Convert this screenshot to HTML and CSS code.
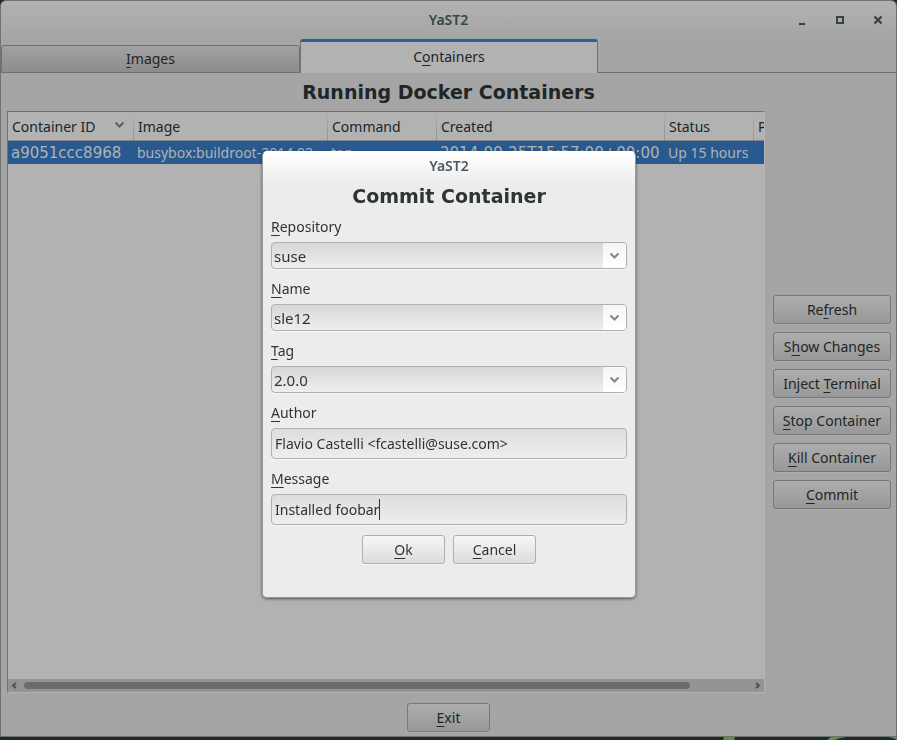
FILE: index.html
```html
<!DOCTYPE html>
<html lang="en">
<head>
<meta charset="utf-8">
<title>YaST2</title>
<link rel="stylesheet" href="styles.css">
</head>
<body>
<main class="window">
  <header class="titlebar">
    <span class="title">YaST2</span>
    <div class="window-controls">
      <button type="button" aria-label="Minimize"><svg width="10" height="10" viewBox="0 0 10 10"><path d="M2 8h6v2H2z" fill="#384347"/></svg></button>
      <button type="button" aria-label="Maximize"><svg width="10" height="10" viewBox="0 0 10 10"><path d="M2 2h6v6H2z" fill="none" stroke="#384347" stroke-width="2"/></svg></button>
      <button type="button" aria-label="Close"><svg width="10" height="10" viewBox="0 0 10 10"><path d="M1.500 1.500l7 7M8.500 1.500l-7 7" stroke="#384347" stroke-width="2.400"/></svg></button>
    </div>
  </header>
  <nav class="tabs">
    <button type="button" class="tab"><span><u>I</u>mages</span></button>
    <button type="button" class="tab active"><span>C<u>o</u>ntainers</span></button>
  </nav>
  <h1>Running Docker Containers</h1>
  <section class="content">
    <div class="panel">
      <table>
        <colgroup><col class="c-id"><col class="c-image"><col class="c-command"><col class="c-created"><col class="c-status"><col class="c-ports"></colgroup>
        <thead>
          <tr>
            <th>Container ID <svg class="sort" width="11" height="8" viewBox="0 0 11 8"><path d="M1.500 1.500l4 4 4-4" fill="none" stroke="#5f6162" stroke-width="2"/></svg></th>
            <th>Image</th><th>Command</th><th>Created</th><th>Status</th><th>Ports</th>
          </tr>
        </thead>
        <tbody>
          <tr><td class="numeric">a9051ccc8968</td><td>busybox:buildroot-2014.02</td><td>top</td><td class="numeric">2014-09-25T15:57:00+00:00</td><td>Up 15 hours</td><td></td></tr>
        </tbody>
      </table>
      <div class="scrollbar">
        <svg width="7" height="7" viewBox="0 0 7 7"><path d="M5 1L2 3.500 5 6" fill="none" stroke="#4f5152" stroke-width="2"/></svg>
        <div class="track"><div class="thumb"></div></div>
        <svg width="7" height="7" viewBox="0 0 7 7"><path d="M2 1l3 2.500L2 6" fill="none" stroke="#4f5152" stroke-width="2"/></svg>
      </div>
    </div>
    <aside class="actions">
      <button type="button" class="btn dim">Re<u>f</u>resh</button>
      <button type="button" class="btn dim">S<u>h</u>ow Changes</button>
      <button type="button" class="btn dim">Inject <u>T</u>erminal</button>
      <button type="button" class="btn dim"><u>S</u>top Container</button>
      <button type="button" class="btn dim"><u>K</u>ill Container</button>
      <button type="button" class="btn dim"><u>C</u>ommit</button>
    </aside>
  </section>
  <footer><button type="button" class="btn dim small"><u>E</u>xit</button></footer>
</main>
<div class="desktop"><svg width="897" height="3" viewBox="0 0 897 3"><path d="M724 0h11l-1 3h-11zM831 0h16q-8 1-12 3h-8zM888 0h9v3q-3-2-9-3z" fill="#5c9439"/></svg></div>

<div class="overlay">
  <form class="dialog" role="dialog" aria-labelledby="dialog-heading">
    <div class="dialog-title">YaST2</div>
    <h2 id="dialog-heading">Commit Container</h2>
    <div class="field">
      <label for="repository"><u>R</u>epository</label>
      <div class="combo">
        <select id="repository"><option>suse</option></select>
        <span class="arrow"><svg width="11" height="8" viewBox="0 0 11 8"><path d="M1.500 1.500l4 4 4-4" fill="none" stroke="#868686" stroke-width="2"/></svg></span>
      </div>
    </div>
    <div class="field">
      <label for="name"><u>N</u>ame</label>
      <div class="combo">
        <select id="name"><option>sle12</option></select>
        <span class="arrow"><svg width="11" height="8" viewBox="0 0 11 8"><path d="M1.500 1.500l4 4 4-4" fill="none" stroke="#868686" stroke-width="2"/></svg></span>
      </div>
    </div>
    <div class="field">
      <label for="tag"><u>T</u>ag</label>
      <div class="combo">
        <select id="tag"><option>2.0.0</option></select>
        <span class="arrow"><svg width="11" height="8" viewBox="0 0 11 8"><path d="M1.500 1.500l4 4 4-4" fill="none" stroke="#868686" stroke-width="2"/></svg></span>
      </div>
    </div>
    <div class="field">
      <label for="author"><u>A</u>uthor</label>
      <input id="author" type="text" value="Flavio Castelli &lt;fcastelli@suse.com&gt;">
    </div>
    <div class="field">
      <label for="message"><u>M</u>essage</label>
      <div class="caret-box">
        <input id="message" type="text" value="Installed foobar">
        <span class="caret"></span>
      </div>
    </div>
    <div class="dialog-buttons">
      <button type="button" class="btn small"><u>O</u>k</button>
      <button type="button" class="btn small"><u>C</u>ancel</button>
    </div>
  </form>
</div>
</body>
</html>
```

FILE: styles.css
```css
* { box-sizing: border-box; }

body {
  margin: 0;
  min-height: 100vh;
  display: flex;
  flex-direction: column;
  background: #1b2c22;
  color: #202627;
  font: 14px/20px "Noto Sans", sans-serif;
}

button, input, select { font: inherit; color: inherit; }
button { padding: 0; border: 0; background: none; }
u { text-underline-offset: 3px; text-decoration-thickness: 1px; text-decoration-skip-ink: none; }
svg { display: block; }

.window {
  flex: 1;
  display: flex;
  flex-direction: column;
  min-height: 0;
  border: 1px solid #717171;
  border-radius: 6px 6px 0 0;
  background: linear-gradient(#b2b2b2, #a5a5a5 38px);
}

.titlebar {
  display: grid;
  grid-template-columns: 1fr auto 1fr;
  align-items: center;
  height: 38px;
}
.title { grid-column: 2; }
.title, .dialog-title { font-size: 14px; font-weight: 600; color: #394649; }
.window-controls { display: flex; justify-content: flex-end; gap: 28px; padding-right: 13px; }

.tabs { display: flex; align-items: flex-end; height: 34px; background: linear-gradient(#717171, #717171) bottom / 100% 1px no-repeat; }
.tab {
  width: 299px;
  height: 28px;
  padding-bottom: 1px;
  border: 1px solid #717171;
  border-radius: 3px 3px 0 0;
  background: linear-gradient(#a2a2a2, #8c8c8c);
}
.tab.active {
  width: 298px;
  height: 34px;
  padding-bottom: 2px;
  border-top: 3px solid #2d5f95;
  border-bottom: 0;
  background: #b2b2b2;
}

h1, h2 { margin: 0; text-align: center; font: 700 19px/24px "DejaVu Sans", sans-serif; }
h1 { padding: 7px 0; }

.content { flex: 1; display: flex; gap: 8px; padding: 0 5px 0 6px; min-height: 0; }
.panel {
  flex: 1;
  min-width: 0;
  display: flex;
  flex-direction: column;
  justify-content: space-between;
  overflow: hidden;
  border: 1px solid #b2b2b2;
  border-top-color: #717171;
  border-left-color: #717171;
  background: #b2b2b2;
}
table { width: 856px; table-layout: fixed; border-collapse: separate; border-spacing: 0; }
.c-id { width: 126px; }
.c-image { width: 194px; }
.c-command { width: 109px; }
.c-created { width: 228px; }
.c-status { width: 89px; }
.c-ports { width: 110px; }
th {
  position: relative;
  height: 29px;
  padding: 1px 4px 0;
  border-bottom: 1px solid #858585;
  background: linear-gradient(#b2b2b2, #919191) right / 1px 100% no-repeat;
  font-weight: 400;
  text-align: left;
}
.sort { position: absolute; right: 9px; top: 9px; }
tbody tr { background: #285a8f; color: #b2b2b2; }
td { height: 23px; padding: 0 3px; white-space: nowrap; }
.numeric { font-family: "DejaVu Sans", sans-serif; font-size: 15px; }

.scrollbar { display: flex; align-items: center; gap: 6px; height: 13px; padding: 0 3px; background: #949494; }
.track { flex: 1; }
.thumb { width: 92%; height: 7px; border-radius: 4px; background: #6b6c6c; }

.actions { display: flex; flex-direction: column; justify-content: center; gap: 8px; width: 118px; }
.btn {
  height: 29px;
  border: 1px solid #afafaf;
  border-radius: 3px;
  background: linear-gradient(#f6f6f6, #dcdcdc);
  box-shadow: 0 1px #f5f5f5;
}
.btn.dim { border-color: #777; background: linear-gradient(#adadad, #989898); box-shadow: 0 1px #acacac; }
.btn.small { width: 83px; }
footer { display: flex; justify-content: center; padding: 10px 0 4px; }
.desktop { height: 3px; overflow: hidden; }

.overlay { position: fixed; inset: 0; display: flex; align-items: center; justify-content: center; padding: 9px 0 0 1px; }
.dialog {
  width: 374px;
  padding: 4px 8px 33px;
  border: 1px solid #999;
  border-top-color: #fff;
  border-radius: 5px;
  background: linear-gradient(#fff, #ececec 34px);
  box-shadow: 0 1px 3px #0008;
  color: #2e3436;
}
.dialog-title { text-align: center; color: #4b5a60; }
h2 { padding: 8px 0 9px; }
.field { display: flex; flex-direction: column; gap: 5px; padding-bottom: 10px; }
.field input, .field select {
  width: 100%;
  border: 1px solid #b0b0b0;
  border-radius: 4px;
  outline: 0;
  appearance: none;
  box-shadow: 0 1px #f6f6f6;
}
.field input { height: 31px; padding: 0 3px; background: linear-gradient(#dedede, #ededed); }
.field select { display: block; height: 27px; padding: 0 2px; background: linear-gradient(#d7d7d7, #eee); font-size: 15px; }
.combo, .caret-box { position: relative; }
.arrow {
  position: absolute;
  inset: 1px 1px 1px auto;
  width: 23px;
  display: grid;
  place-items: center;
  border-radius: 0 3px 3px 0;
  background: linear-gradient(#f5f5f5, #fff);
  pointer-events: none;
}
.caret { position: absolute; left: 108px; top: 5px; width: 1px; height: 21px; background: #2e3436; }
.dialog-buttons { display: flex; justify-content: center; gap: 8px; }
```
